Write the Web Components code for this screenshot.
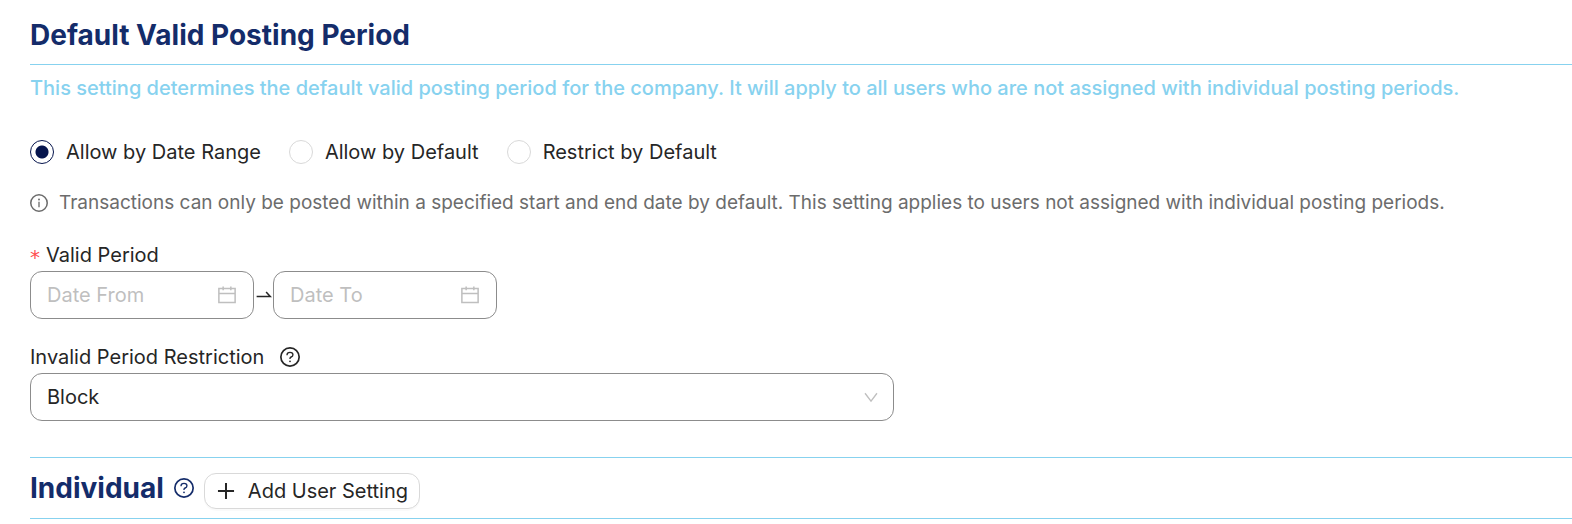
<!DOCTYPE html>
<html lang="en">
<head>
<meta charset="utf-8">
<title>Posting Period</title>
<style>
	body {
		margin: 0;
		background: #fff;
		color: #262626;
		font: 20px/32px Inter, sans-serif;
	}
</style>
</head>
<body>
<posting-period-settings></posting-period-settings>

<script>
const icons = {
	info: `<circle cx="512" cy="512" r="410" stroke-width="76"/><path d="M512 450v270" stroke-width="66"/><circle cx="512" cy="336" r="48" fill="currentColor" stroke="none"/>`,
	question: `<circle cx="512" cy="512" r="410" stroke-width="76"/><path d="M380 430v-14c0-62 58-110 132-110s132 48 132 110c0 48-36 80-78 96-32 12-54 34-54 66v28" stroke-width="60"/><circle cx="512" cy="706" r="40" fill="currentColor" stroke="none"/>`,
	calendar: `<path d="M148 220h728v624H148zM148 440h728M340 128v166M684 128v166" stroke-width="68"/>`,
	down: `<path d="M130 272l382 500 382-500" stroke-width="86"/>`,
	plus: `<path d="M512 152v720M152 512h720" stroke-width="90"/>`,
	arrow: `<path d="M150 570h720L650 324" stroke-width="80"/>`
};

class PpIcon extends HTMLElement {
	connectedCallback() {
		const shadowRoot = this.attachShadow({ mode: 'open' });
		shadowRoot.innerHTML = `
		<style>
			:host {
				display: inline-flex;
				flex: none;
				width: var(--icon-size, 20px);
				height: var(--icon-size, 20px);
			}

			svg {
				width: 100%;
				height: 100%;
				fill: none;
				stroke: currentColor;
			}
		</style>
		<svg viewBox="64 64 896 896" aria-hidden="true">${icons[this.getAttribute('name')]}</svg>`;
	}
}

class PpHeading extends HTMLElement {
	connectedCallback() {
		const shadowRoot = this.attachShadow({ mode: 'open' });
		shadowRoot.innerHTML = `
		<style>
			:host {
				display: flex;
				align-items: baseline;
				gap: 10px;
				padding: 10px 0 9px;
				color: #142c6a;
				border-bottom: 1px solid #87d2ef;
			}

			:host([ruled]) {
				border-top: 1px solid #87d2ef;
			}

			h2 {
				margin: 0;
				font-size: 28px;
				line-height: 40px;
				font-weight: 700;
			}
		</style>
		<h2><slot></slot></h2>
		<slot name="extra"></slot>`;
	}
}

class PpRadioGroup extends HTMLElement {
	connectedCallback() {
		const options = this.getAttribute('options').split('|');
		const shadowRoot = this.attachShadow({ mode: 'open' });
		shadowRoot.innerHTML = `
		<style>
			:host {
				display: block;
			}

			div {
				display: flex;
				flex-wrap: wrap;
				gap: 28px;
			}

			label {
				display: flex;
				align-items: center;
				gap: 12px;
			}

			input {
				appearance: none;
				box-sizing: border-box;
				width: 24px;
				height: 24px;
				margin: 0;
				border: 1px solid #d9d9d9;
				border-radius: 50%;
			}

			input:checked {
				border-color: #06154d;
				background: radial-gradient(circle, #06154d 6px, transparent 7px);
			}
		</style>
		<div role="radiogroup" aria-label="Default posting rule">
			${options.map((text, i) => `<label><input type="radio" name="rule" ${i == 0 ? 'checked' : ''}>${text}</label>`).join('')}
		</div>`;
	}
}

class PpDateInput extends HTMLElement {
	connectedCallback() {
		const text = this.getAttribute('placeholder');
		const shadowRoot = this.attachShadow({ mode: 'open' });
		shadowRoot.innerHTML = `
		<style>
			:host {
				display: block;
				width: 224px;
			}

			.box {
				display: flex;
				align-items: center;
				box-sizing: border-box;
				height: 48px;
				padding: 0 16px;
				border: 1px solid #8c8c8c;
				border-radius: 12px;
				color: #bfbfbf;
			}

			input {
				flex: 1;
				min-width: 0;
				padding: 0;
				border: 0;
				outline: 0;
				background: none;
				font: inherit;
				color: #262626;
			}

			input::placeholder {
				color: #bfbfbf;
			}
		</style>
		<div class="box">
			<input type="text" placeholder="${text}" aria-label="${text}">
			<pp-icon name="calendar"></pp-icon>
		</div>`;
	}
}

class PpSelect extends HTMLElement {
	connectedCallback() {
		const shadowRoot = this.attachShadow({ mode: 'open' });
		shadowRoot.innerHTML = `
		<style>
			:host {
				display: block;
			}

			label {
				display: flex;
				align-items: center;
				gap: 16px;
			}

			.box {
				display: grid;
				align-items: center;
			}

			select, .box pp-icon {
				grid-area: 1 / 1;
			}

			select {
				appearance: none;
				box-sizing: border-box;
				width: 100%;
				height: 48px;
				padding: 0 16px;
				border: 1px solid #8c8c8c;
				border-radius: 12px;
				background: none;
				font: inherit;
				color: inherit;
			}

			.box pp-icon {
				--icon-size: 14px;
				justify-self: end;
				margin-right: 16px;
				color: #bfbfbf;
				pointer-events: none;
			}
		</style>
		<label for="field">${this.getAttribute('label')} <pp-icon name="question"></pp-icon></label>
		<div class="box">
			<select id="field"><option>Block</option><option>Warning</option></select>
			<pp-icon name="down"></pp-icon>
		</div>`;
	}
}

class PpButton extends HTMLElement {
	connectedCallback() {
		const shadowRoot = this.attachShadow({ mode: 'open' });
		shadowRoot.innerHTML = `
		<style>
			:host {
				display: block;
			}

			button {
				display: flex;
				align-items: center;
				gap: 12px;
				box-sizing: border-box;
				height: 36px;
				padding: 0 11px;
				border: 1px solid #d9d9d9;
				border-radius: 12px;
				background: #fff;
				box-shadow: 0 2px 0 rgba(0, 0, 0, .02);
				font: inherit;
				color: #262626;
			}

			/* the label, not the icon, sets the button's baseline */
			span {
				align-self: baseline;
				line-height: 34px;
			}
		</style>
		<button type="button"><pp-icon name="plus"></pp-icon><span><slot></slot></span></button>`;
	}
}

class PostingPeriodSettings extends HTMLElement {
	connectedCallback() {
		const shadowRoot = this.attachShadow({ mode: 'open' });
		shadowRoot.innerHTML = `
		<style>
			:host {
				display: block;
				padding: 5px 0 0 30px;
			}

			p {
				margin: 0;
			}

			.lead {
				padding: 7px 0 32px;
				color: #87d2ef;
				font-weight: 500;
			}

			.note {
				--icon-size: 18px;
				display: flex;
				align-items: center;
				gap: 11px;
				padding: 19px 0 20px;
				color: #6c6c6c;
				font-size: 19px;
			}

			.title {
				display: flex;
				gap: 6px;
			}

			.period {
				display: flex;
				align-items: center;
				gap: 1px;
			}

			.period pp-icon {
				--icon-size: 17px;
			}

			.required {
				padding-top: 2px;
				color: #ff4d4f;
				font-family: "DejaVu Sans", sans-serif;
			}

			.title, .required {
				height: 32px;
				box-sizing: border-box;
			}

			pp-select {
				width: 56%;
				padding: 22px 0 36px;
			}
		</style>
		<pp-heading>Default Valid Posting Period</pp-heading>
		<p class="lead">This setting determines the default valid posting period for the company. It will apply to all users who are not assigned with individual posting periods.</p>
		<pp-radio-group options="Allow by Date Range|Allow by Default|Restrict by Default"></pp-radio-group>
		<p class="note"><pp-icon name="info"></pp-icon>Transactions can only be posted within a specified start and end date by default. This setting applies to users not assigned with individual posting periods.</p>
		<div class="title"><span class="required">*</span>Valid Period</div>
		<div class="period">
			<pp-date-input placeholder="Date From"></pp-date-input>
			<pp-icon name="arrow"></pp-icon>
			<pp-date-input placeholder="Date To"></pp-date-input>
		</div>
		<pp-select label="Invalid Period Restriction"></pp-select>
		<pp-heading ruled>Individual
			<pp-icon slot="extra" name="question"></pp-icon>
			<pp-button slot="extra">Add User Setting</pp-button>
		</pp-heading>`;
	}
}

customElements.define('pp-icon', PpIcon);
customElements.define('pp-heading', PpHeading);
customElements.define('pp-radio-group', PpRadioGroup);
customElements.define('pp-date-input', PpDateInput);
customElements.define('pp-select', PpSelect);
customElements.define('pp-button', PpButton);
customElements.define('posting-period-settings', PostingPeriodSettings);
</script>
</body>
</html>
